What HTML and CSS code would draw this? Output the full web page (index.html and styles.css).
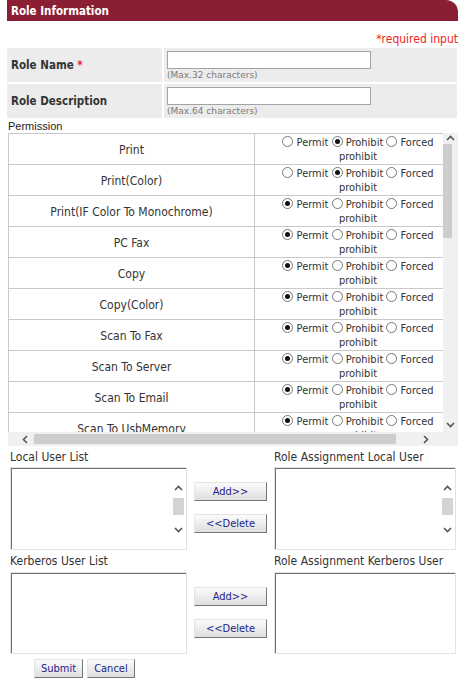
FILE: index.html
```html
<!DOCTYPE html>
<html lang="en">
<head>
    <meta charset="UTF-8">
    <title>Role Information</title>
    <meta name="viewport" content="width=device-width, initial-scale=1.0">
    <link rel="stylesheet" href="styles.css">
</head>
<body>
    <div class="page">
        <div class="title-bar">Role Information</div>
        <div class="required">*required input</div>

        <table class="info">
            <tr>
                <th>Role Name <span class="star">*</span></th>
                <td>
                    <input type="text" class="text-box">
                    <div class="hint">(Max.32 characters)</div>
                </td>
            </tr>
            <tr>
                <th>Role Description</th>
                <td>
                    <input type="text" class="text-box">
                    <div class="hint">(Max.64 characters)</div>
                </td>
            </tr>
        </table>

        <div class="perm-label">Permission</div>
        <div class="perm-box">
            <div class="perm-view">
                <table class="perm">
                    <tr><td class="fn">Print</td><td class="opt"><input type="radio" name="p1"> Permit <input type="radio" name="p1" checked> Prohibit <input type="radio" name="p1"> Forced<br>prohibit</td></tr>
                    <tr><td class="fn">Print(Color)</td><td class="opt"><input type="radio" name="p2"> Permit <input type="radio" name="p2" checked> Prohibit <input type="radio" name="p2"> Forced<br>prohibit</td></tr>
                    <tr><td class="fn">Print(IF Color To Monochrome)</td><td class="opt"><input type="radio" name="p3" checked> Permit <input type="radio" name="p3"> Prohibit <input type="radio" name="p3"> Forced<br>prohibit</td></tr>
                    <tr><td class="fn">PC Fax</td><td class="opt"><input type="radio" name="p4" checked> Permit <input type="radio" name="p4"> Prohibit <input type="radio" name="p4"> Forced<br>prohibit</td></tr>
                    <tr><td class="fn">Copy</td><td class="opt"><input type="radio" name="p5" checked> Permit <input type="radio" name="p5"> Prohibit <input type="radio" name="p5"> Forced<br>prohibit</td></tr>
                    <tr><td class="fn">Copy(Color)</td><td class="opt"><input type="radio" name="p6" checked> Permit <input type="radio" name="p6"> Prohibit <input type="radio" name="p6"> Forced<br>prohibit</td></tr>
                    <tr><td class="fn">Scan To Fax</td><td class="opt"><input type="radio" name="p7" checked> Permit <input type="radio" name="p7"> Prohibit <input type="radio" name="p7"> Forced<br>prohibit</td></tr>
                    <tr><td class="fn">Scan To Server</td><td class="opt"><input type="radio" name="p8" checked> Permit <input type="radio" name="p8"> Prohibit <input type="radio" name="p8"> Forced<br>prohibit</td></tr>
                    <tr><td class="fn">Scan To Email</td><td class="opt"><input type="radio" name="p9" checked> Permit <input type="radio" name="p9"> Prohibit <input type="radio" name="p9"> Forced<br>prohibit</td></tr>
                    <tr><td class="fn">Scan To UsbMemory</td><td class="opt"><input type="radio" name="p10" checked> Permit <input type="radio" name="p10"> Prohibit <input type="radio" name="p10"> Forced<br>prohibit</td></tr>
                </table>
            </div>
            <div class="vbar">
                <svg class="arrow" width="9" height="6" viewBox="0 0 9 6"><path d="M1 5 L4.5 1.5 L8 5" fill="none" stroke="#555" stroke-width="1.6"/></svg>
                <div class="track-v"><div class="thumb-v"></div></div>
                <svg class="arrow" width="9" height="6" viewBox="0 0 9 6"><path d="M1 1 L4.5 4.5 L8 1" fill="none" stroke="#555" stroke-width="1.6"/></svg>
            </div>
            <div class="hbar">
                <svg class="arrow" width="6" height="9" viewBox="0 0 6 9"><path d="M5 1 L1.5 4.5 L5 8" fill="none" stroke="#555" stroke-width="1.6"/></svg>
                <div class="track-h"><div class="thumb-h"></div></div>
                <svg class="arrow" width="6" height="9" viewBox="0 0 6 9"><path d="M1 1 L4.5 4.5 L1 8" fill="none" stroke="#555" stroke-width="1.6"/></svg>
            </div>
            <div class="corner"></div>
        </div>

        <div class="users">
            <div class="list-label">Local User List</div>
            <div></div>
            <div class="list-label">Role Assignment Local User</div>

            <div class="list-box">
                <div class="list-bar">
                    <svg width="9" height="6" viewBox="0 0 9 6"><path d="M1 5 L4.5 1.5 L8 5" fill="none" stroke="#555" stroke-width="1.6"/></svg>
                    <div class="list-thumb"></div>
                    <svg width="9" height="6" viewBox="0 0 9 6"><path d="M1 1 L4.5 4.5 L8 1" fill="none" stroke="#555" stroke-width="1.6"/></svg>
                </div>
            </div>
            <div class="move-btns">
                <button class="btn move">Add&gt;&gt;</button>
                <button class="btn move">&lt;&lt;Delete</button>
            </div>
            <div class="list-box">
                <div class="list-bar">
                    <svg width="9" height="6" viewBox="0 0 9 6"><path d="M1 5 L4.5 1.5 L8 5" fill="none" stroke="#555" stroke-width="1.6"/></svg>
                    <div class="list-thumb"></div>
                    <svg width="9" height="6" viewBox="0 0 9 6"><path d="M1 1 L4.5 4.5 L8 1" fill="none" stroke="#555" stroke-width="1.6"/></svg>
                </div>
            </div>

            <div class="list-label second">Kerberos User List</div>
            <div></div>
            <div class="list-label second">Role Assignment Kerberos User</div>

            <div class="list-box short"></div>
            <div class="move-btns">
                <button class="btn move">Add&gt;&gt;</button>
                <button class="btn move">&lt;&lt;Delete</button>
            </div>
            <div class="list-box short"></div>
        </div>

        <div class="actions">
            <button class="btn">Submit</button>
            <button class="btn">Cancel</button>
        </div>
    </div>
</body>
</html>
```

FILE: styles.css
```css
* {
    box-sizing: border-box;
}

body {
    margin: 0;
    background: #fff;
    font-family: 'DejaVu Sans Condensed', 'DejaVu Sans', sans-serif;
    font-size: 12px;
    color: #333;
}

.page {
    width: 460px;
    padding: 0 2px 0 7px;
}

.title-bar {
    height: 21px;
    background-color: #8a1f34;
    color: #fff;
    font-size: 11.5px;
    font-weight: bold;
    line-height: 22px;
    padding-left: 4px;
    border-top-right-radius: 12px;
}

.required {
    text-align: right;
    color: #f42323;
    margin-top: 11px;
    line-height: 14px;
}

.info {
    width: 450px;
    border-collapse: separate;
    border-spacing: 0 2px;
    margin-top: 0;
}

.info th, .info td {
    background-color: #ececec;
    height: 34px;
    padding: 0;
}

.info th {
    width: 157px;
    text-align: left;
    vertical-align: middle;
    padding-left: 4px;
    font-size: 11.5px;
    font-weight: bold;
    color: #333;
    border-right: 2px solid #fff;
}

.info td {
    padding: 3px 3px 0 3px;
    vertical-align: top;
}

.star {
    color: #e8262a;
}

.text-box {
    display: block;
    width: 204px;
    height: 18px;
    border: 1px solid #a4a4a4;
    margin: 0;
    padding: 0;
    font-size: 11px;
}

.hint {
    font-family: 'DejaVu Sans', sans-serif;
    font-size: 9px;
    color: #7b7b7b;
    margin-top: 1px;
}

.perm-label {
    font-family: 'Liberation Sans', Arial, sans-serif;
    font-size: 11px;
    color: #222;
    line-height: 13px;
    padding-left: 1px;
}

.perm-box {
    display: grid;
    grid-template-columns: 435px 15px;
    grid-template-rows: 299px 14px;
    width: 451px;
    margin-left: 1px;
}

.perm-view {
    overflow: hidden;
    border-top: 1px solid #c9c9c9;
}

.perm {
    border-collapse: collapse;
    width: 454px;
    color: #333;
}

.perm td {
    border: 1px solid #c9c9c9;
    height: 30px;
    padding: 0 2px;
    text-align: center;
    line-height: 14px;
}

.perm tr:first-child td {
    border-top: none;
}

.perm td.fn {
    width: 246px;
    padding-top: 2px;
}

.perm td.opt {
    font-size: 11px;
    vertical-align: top;
    padding-top: 2px;
}

input[type="radio"] {
    appearance: none;
    -webkit-appearance: none;
    width: 11px;
    height: 11px;
    margin: 0;
    border: 1px solid #777;
    border-radius: 50%;
    background: #fff;
    vertical-align: -1px;
    position: relative;
}

input[type="radio"]:checked::after {
    content: "";
    position: absolute;
    left: 2px;
    top: 2px;
    width: 5px;
    height: 5px;
    border-radius: 50%;
    background: #111;
}

.vbar {
    background: #f0f0f0;
    display: flex;
    flex-direction: column;
    align-items: center;
    padding: 2px 0 4px;
}

.vbar .arrow {
    flex: none;
}

.track-v {
    flex: 1;
    width: 100%;
    padding: 3px 6px 0 0;
}

.thumb-v {
    height: 94px;
    background: #cdcdcd;
}

.hbar {
    background: #f0f0f0;
    display: flex;
    align-items: center;
    padding: 0 14px;
    gap: 6px;
}

.track-h {
    flex: 1;
    height: 100%;
    padding: 2px 21px 2px 0;
}

.thumb-h {
    height: 100%;
    background: #cdcdcd;
}

.corner {
    background: #f0f0f0;
}

.users {
    display: grid;
    grid-template-columns: 177px 73px 182px;
    column-gap: 7px;
    padding-left: 3px;
}

.list-label {
    line-height: 14px;
    height: 21px;
    padding-top: 4px;
    color: #333;
}

.list-label.second {
    height: 22px;
    padding-top: 4px;
}

.list-box {
    height: 83px;
    border: 1px solid #e2e2e2;
    box-shadow: inset 1px 1px 0 #6f6f6f;
    background: #fff;
    display: flex;
    justify-content: flex-end;
    padding: 0 1px 0 2px;
}

.list-box.short {
    height: 82px;
}

.list-bar {
    width: 13px;
    display: flex;
    flex-direction: column;
    align-items: center;
    padding-top: 17px;
}

.list-thumb {
    width: 11px;
    height: 17px;
    margin: 7px 0 12px;
    background: #d4d4d4;
}

.move-btns {
    display: flex;
    flex-direction: column;
    gap: 13px;
    padding-top: 15px;
}

.btn {
    font-family: 'DejaVu Sans Condensed', 'DejaVu Sans', sans-serif;
    font-size: 11px;
    color: #23238c;
    background: linear-gradient(#fbfbfb, #dedede);
    border: 1px solid;
    border-color: #e4e4e4 #767676 #767676 #e4e4e4;
    height: 19px;
    padding: 0 6px;
    margin: 0;
    cursor: pointer;
}

.btn.move {
    width: 73px;
}

.actions {
    display: flex;
    gap: 4px;
    padding-left: 27px;
    margin-top: 5px;
}
```
